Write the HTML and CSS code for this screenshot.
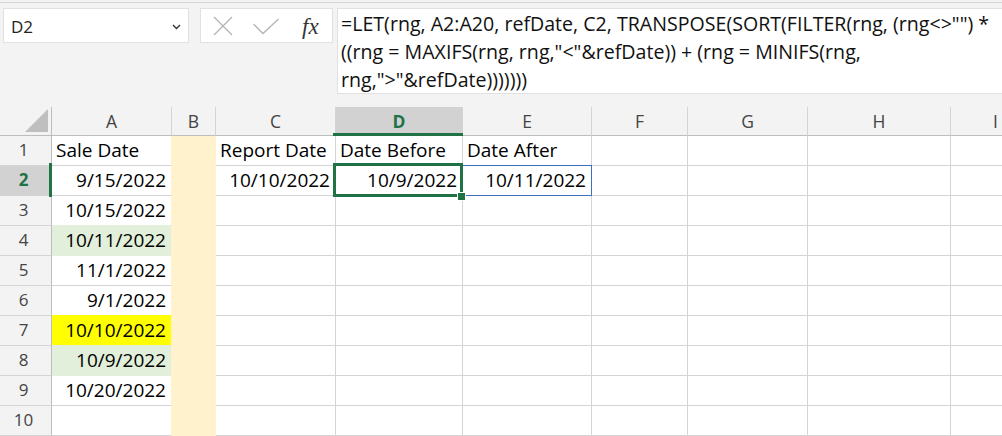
FILE: index.html
```html
<!DOCTYPE html>
<html>
<head>
<meta charset="utf-8">
<link rel="stylesheet" href="styles.css">
</head>
<body>
<div class="fbar">
  <div class="namebox">
    <span class="nametext">D2</span>
    <svg class="chev" width="9" height="6" viewBox="0 0 9 6"><path d="M1 1L4.5 4.5L8 1" fill="none" stroke="#333" stroke-width="1.4"/></svg>
  </div>
  <div class="fxbox">
    <svg class="ico-x" width="20" height="20" viewBox="0 0 20 20"><path d="M1 1L19 19M19 1L1 19" fill="none" stroke="#b4b4b4" stroke-width="1.3"/></svg>
    <svg class="ico-ok" width="26" height="17" viewBox="0 0 26 17"><path d="M0.5 6L10 15.5L25.5 1" fill="none" stroke="#b4b4b4" stroke-width="1.3"/></svg>
    <span class="fx">fx</span>
  </div>
  <div class="formula">
    <span class="fl">=LET(rng, A2:A20, refDate, C2, TRANSPOSE(SORT(FILTER(rng, (rng&lt;&gt;"") *</span>
    <span class="fl">((rng = MAXIFS(rng, rng,"&lt;"&amp;refDate)) + (rng = MINIFS(rng,</span>
    <span class="fl">rng,"&gt;"&amp;refDate)))))))</span>
  </div>
</div>

<div class="sheet">
  <div class="cell ch corner"><svg width="23" height="23" viewBox="0 0 23 23"><path d="M23 0L23 23L0 23Z" fill="#bfbfbf"/></svg></div>
  <div class="cell ch">A</div>
  <div class="cell ch">B</div>
  <div class="cell ch">C</div>
  <div class="cell ch chsel">D</div>
  <div class="cell ch">E</div>
  <div class="cell ch">F</div>
  <div class="cell ch">G</div>
  <div class="cell ch">H</div>
  <div class="cell ch">I</div>

  <div class="cell rh">1</div>
  <div class="cell a">Sale Date</div>
  <div class="cell b"></div>
  <div class="cell">Report Date</div>
  <div class="cell">Date Before</div>
  <div class="cell">Date After</div>
  <div class="cell"></div><div class="cell"></div><div class="cell"></div><div class="cell"></div>

  <div class="cell rh rhsel">2</div>
  <div class="cell a n">9/15/2022</div>
  <div class="cell b"></div>
  <div class="cell n">10/10/2022</div>
  <div class="cell n">10/9/2022</div>
  <div class="cell n">10/11/2022</div>
  <div class="cell"></div><div class="cell"></div><div class="cell"></div><div class="cell"></div>

  <div class="cell rh">3</div>
  <div class="cell a n">10/15/2022</div>
  <div class="cell b"></div>
  <div class="cell"></div><div class="cell"></div><div class="cell"></div><div class="cell"></div><div class="cell"></div><div class="cell"></div><div class="cell"></div>

  <div class="cell rh">4</div>
  <div class="cell a n g">10/11/2022</div>
  <div class="cell b"></div>
  <div class="cell"></div><div class="cell"></div><div class="cell"></div><div class="cell"></div><div class="cell"></div><div class="cell"></div><div class="cell"></div>

  <div class="cell rh">5</div>
  <div class="cell a n">11/1/2022</div>
  <div class="cell b"></div>
  <div class="cell"></div><div class="cell"></div><div class="cell"></div><div class="cell"></div><div class="cell"></div><div class="cell"></div><div class="cell"></div>

  <div class="cell rh">6</div>
  <div class="cell a n">9/1/2022</div>
  <div class="cell b"></div>
  <div class="cell"></div><div class="cell"></div><div class="cell"></div><div class="cell"></div><div class="cell"></div><div class="cell"></div><div class="cell"></div>

  <div class="cell rh">7</div>
  <div class="cell a n y">10/10/2022</div>
  <div class="cell b"></div>
  <div class="cell"></div><div class="cell"></div><div class="cell"></div><div class="cell"></div><div class="cell"></div><div class="cell"></div><div class="cell"></div>

  <div class="cell rh">8</div>
  <div class="cell a n g">10/9/2022</div>
  <div class="cell b"></div>
  <div class="cell"></div><div class="cell"></div><div class="cell"></div><div class="cell"></div><div class="cell"></div><div class="cell"></div><div class="cell"></div>

  <div class="cell rh">9</div>
  <div class="cell a n">10/20/2022</div>
  <div class="cell b"></div>
  <div class="cell"></div><div class="cell"></div><div class="cell"></div><div class="cell"></div><div class="cell"></div><div class="cell"></div><div class="cell"></div>

  <div class="cell rh">10</div>
  <div class="cell a"></div>
  <div class="cell b"></div>
  <div class="cell"></div><div class="cell"></div><div class="cell"></div><div class="cell"></div><div class="cell"></div><div class="cell"></div><div class="cell"></div>

  <div class="colmark"></div>
  <div class="rowmark"></div>
  <div class="refbox"></div>
  <div class="selbox"></div>
  <div class="handle"></div>
</div>
</body>
</html>
```

FILE: styles.css
```css
* { box-sizing: border-box; }

html, body {
  margin: 0;
  padding: 0;
  width: 1002px;
  height: 436px;
  overflow: hidden;
  background: #f3f3f3;
  font-family: "Open Sans", "Liberation Sans", sans-serif;
  color: #000;
}

.fbar {
  display: flex;
  align-items: flex-start;
  height: 105px;
  margin-top: 2px;
  border-top: 1px solid #d6d6d6;
  padding: 5px 0 0 3px;
}

.namebox {
  width: 186px;
  height: 35px;
  background: #fff;
  border: 1px solid #e1e1e1;
  display: flex;
  align-items: center;
  justify-content: space-between;
  padding: 2px 7px 0 7px;
  margin-right: 11px;
}

.nametext {
  font-size: 17px;
  line-height: 24px;
  color: #222;
}

.chev { margin-top: 1px; }

.fxbox {
  width: 133px;
  height: 35px;
  background: #fff;
  border: 1px solid #e1e1e1;
  display: flex;
  align-items: center;
  padding-left: 12px;
  margin-right: 4px;
}

.ico-x { margin-top: 1px; }
.ico-ok { margin-left: 20px; margin-top: 2px; }

.fx {
  margin-left: 23px;
  font-family: "Liberation Serif", "DejaVu Serif", serif;
  font-style: italic;
  font-size: 23px;
  line-height: 24px;
  color: #333;
  margin-top: 2px;
}

.formula {
  flex: 1;
  height: 86px;
  margin-right: -6px;
  background: #fff;
  border: 1px solid #e1e1e1;
  padding: 1px 0 0 3px;
  font-size: 19.6px;
  line-height: 28px;
  color: #111;
  overflow: hidden;
}

.fl {
  display: block;
  white-space: nowrap;
}

.sheet {
  position: relative;
  display: grid;
  grid-template-columns: 52px 120px 44px 120px 127px 129px 96px 120px 143px 90px;
  grid-template-rows: 29px repeat(10, 30px);
  background: #fff;
}

.cell {
  border-right: 1px solid #d4d4d4;
  border-bottom: 1px solid #d4d4d4;
  display: flex;
  align-items: flex-end;
  padding: 0 5px 2px 4px;
  font-size: 19px;
  line-height: 26px;
  white-space: nowrap;
  overflow: visible;
}

.n { justify-content: flex-end; }

.ch {
  background: #f3f3f3;
  border-bottom-color: #bdbdbd;
  justify-content: center;
  align-items: center;
  padding: 0;
  font-size: 17.5px;
  color: #444;
}

.corner {
  justify-content: flex-end;
  align-items: flex-end;
  padding: 0 3px 3px 0;
  border-right-color: #bdbdbd;
}

.chsel {
  background: #d2d2d2;
  color: #217346;
  font-weight: 700;
}

.rh {
  background: #f3f3f3;
  border-right-color: #bdbdbd;
  justify-content: center;
  padding: 0 4px 2px 0;
  font-size: 17px;
  color: #444;
}

.rhsel {
  background: #d2d2d2;
  color: #217346;
  font-weight: 700;
}

.a { border-right-color: #fff2cc; }

.b {
  background: #fff2cc;
  border-right-color: #fff2cc;
  border-bottom-color: #fff2cc;
}

.g {
  background: #e2efda;
  border-bottom-color: #e2efda;
  box-shadow: 0 -1px 0 #e2efda;
}

.y {
  background: #ffff00;
  border-bottom-color: #ffff00;
  box-shadow: 0 -1px 0 #ffff00;
}

.colmark {
  position: absolute;
  left: 333px;
  top: 26px;
  width: 130px;
  height: 3px;
  background: #217346;
}

.rowmark {
  position: absolute;
  left: 49px;
  top: 56px;
  width: 3px;
  height: 34px;
  background: #217346;
}

.refbox {
  position: absolute;
  left: 462px;
  top: 58px;
  width: 130px;
  height: 31px;
  border: 1px solid #3f6fc2;
}

.selbox {
  position: absolute;
  left: 333px;
  top: 56px;
  width: 130px;
  height: 34px;
  border: 3px solid #217346;
}

.handle {
  position: absolute;
  left: 457px;
  top: 85px;
  width: 9px;
  height: 9px;
  background: #217346;
  border: 1px solid #fff;
}
```
